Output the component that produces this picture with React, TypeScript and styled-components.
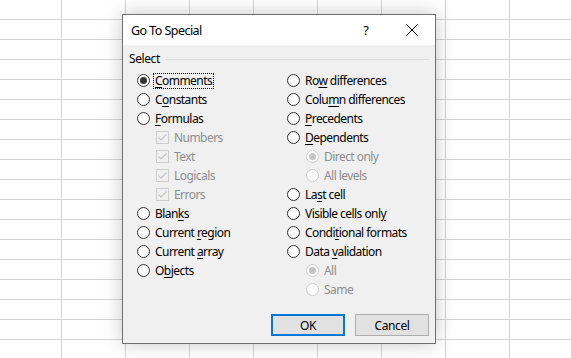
import React from "react";
import styled, { createGlobalStyle } from "styled-components";

const Global = createGlobalStyle`
  html, body { margin: 0; padding: 0; }
  body {
    width: 571px;
    height: 358px;
    overflow: hidden;
    background-color: #ffffff;
    background-image:
      linear-gradient(to right, transparent 0 63px, #d4d4d4 63px 64px),
      linear-gradient(to bottom, transparent 0 19px, #d4d4d4 19px 20px);
    background-size: 64px 100%, 100% 20px;
    background-position: -2px 0, 0 0;
    font-family: "Noto Sans", "Open Sans", sans-serif;
  }
`;

const Sheet = styled.div`
  position: relative;
  width: 571px;
  height: 358px;
`;

const Dialog = styled.div`
  position: absolute;
  left: 122px;
  top: 14px;
  width: 312px;
  height: 328px;
  border: 1px solid #6f6f6f;
  background: #f0f0f0;
  box-shadow: 0 0 18px rgba(0, 0, 0, 0.22);
  display: flex;
  flex-direction: column;
  font-size: 12px;
  color: #000;
`;

const TitleBar = styled.div`
  height: 30px;
  background: #ffffff;
  display: flex;
  align-items: center;
  padding-left: 8px;
`;

const Title = styled.div`
  flex: 1;
  font-size: 12.5px;
  letter-spacing: -0.55px;
`;

const TitleButton = styled.div`
  width: 46px;
  height: 30px;
  display: flex;
  align-items: center;
  justify-content: center;
  font-size: 13px;
`;

const Body = styled.div`
  flex: 1;
  display: flex;
  flex-direction: column;
  padding: 6px 6px 7px 6px;
`;

const GroupHeader = styled.div`
  display: flex;
  align-items: center;
  gap: 5px;
  height: 16px;
  line-height: 16px;
  letter-spacing: -0.4px;
`;

const GroupLine = styled.div`
  flex: 1;
  height: 1px;
  background: #dcdcdc;
`;

const Columns = styled.div`
  display: grid;
  grid-template-columns: 150px 1fr;
  margin-top: 4px;
  padding-left: 8px;
`;

const Column = styled.div`
  display: flex;
  flex-direction: column;
`;

const Row = styled.div<{ $indent?: boolean }>`
  height: 19px;
  display: flex;
  align-items: center;
  padding-left: ${(p) => (p.$indent ? "19px" : "0")};
  gap: 4px;
  white-space: nowrap;
`;

const Label = styled.span<{ $disabled?: boolean; $focused?: boolean }>`
  color: ${(p) => (p.$disabled ? "#8d8d8d" : "#000")};
  letter-spacing: -0.55px;
  line-height: 14px;
  padding: 0 1px;
  outline: ${(p) => (p.$focused ? "1px dotted #000" : "none")};
  outline-offset: 0px;
  u {
    text-underline-offset: 2px;
  }
`;

const Footer = styled.div`
  margin-top: auto;
  display: flex;
  justify-content: flex-end;
  gap: 10px;
`;

const Button = styled.button<{ $primary?: boolean }>`
  width: 74px;
  height: 22px;
  box-sizing: border-box;
  background: #e1e1e1;
  border: ${(p) => (p.$primary ? "2px solid #0078d7" : "1px solid #adadad")};
  font-family: inherit;
  font-size: 12px;
  color: #000;
  padding: 0;
  letter-spacing: -0.4px;
`;

const Radio = ({ checked, disabled }: { checked?: boolean; disabled?: boolean }) => (
  <svg width="13" height="13" viewBox="0 0 13 13">
    <circle cx="6.5" cy="6.5" r="6" fill="#fff" stroke={disabled ? "#cccccc" : "#333"} strokeWidth="1" />
    {checked && <circle cx="6.5" cy="6.5" r="3.5" fill={disabled ? "#c4c4c4" : "#333"} />}
  </svg>
);

const Check = () => (
  <svg width="13" height="13" viewBox="0 0 13 13">
    <rect x="0.5" y="0.5" width="12" height="12" fill="#f0f0f0" stroke="#cccccc" />
    <path d="M2.5 6.5 L5 9 L10.5 3.5" fill="none" stroke="#c4c4c4" strokeWidth="1.1" />
  </svg>
);

type Item = {
  kind: "radio" | "check";
  text: React.ReactNode;
  checked?: boolean;
  disabled?: boolean;
  indent?: boolean;
  focused?: boolean;
};

const left: Item[] = [
  { kind: "radio", text: <><u>C</u>omments</>, checked: true, focused: true },
  { kind: "radio", text: <>C<u>o</u>nstants</> },
  { kind: "radio", text: <><u>F</u>ormulas</> },
  { kind: "check", text: "Numbers", disabled: true, indent: true },
  { kind: "check", text: "Text", disabled: true, indent: true },
  { kind: "check", text: "Logicals", disabled: true, indent: true },
  { kind: "check", text: "Errors", disabled: true, indent: true },
  { kind: "radio", text: <>Blan<u>k</u>s</> },
  { kind: "radio", text: <>Current <u>r</u>egion</> },
  { kind: "radio", text: <>Current <u>a</u>rray</> },
  { kind: "radio", text: <>O<u>b</u>jects</> },
];

const right: Item[] = [
  { kind: "radio", text: <>Ro<u>w</u> differences</> },
  { kind: "radio", text: <>Colu<u>m</u>n differences</> },
  { kind: "radio", text: <><u>P</u>recedents</> },
  { kind: "radio", text: <><u>D</u>ependents</> },
  { kind: "radio", text: "Direct only", disabled: true, indent: true, checked: true },
  { kind: "radio", text: "All levels", disabled: true, indent: true },
  { kind: "radio", text: <>La<u>s</u>t cell</> },
  { kind: "radio", text: <>Visible cells onl<u>y</u></> },
  { kind: "radio", text: <>Condi<u>t</u>ional formats</> },
  { kind: "radio", text: <>Data <u>v</u>alidation</> },
  { kind: "radio", text: "All", disabled: true, indent: true, checked: true },
  { kind: "radio", text: "Same", disabled: true, indent: true },
];

const renderItems = (items: Item[]) =>
  items.map((it, i) => (
    <Row key={i} $indent={it.indent}>
      {it.kind === "radio" ? <Radio checked={it.checked} disabled={it.disabled} /> : <Check />}
      <Label $disabled={it.disabled} $focused={it.focused}>
        {it.text}
      </Label>
    </Row>
  ));

export default function App() {
  return (
    <>
      <Global />
      <Sheet>
        <Dialog>
          <TitleBar>
            <Title>Go To Special</Title>
            <TitleButton>?</TitleButton>
            <TitleButton>
              <svg width="12" height="12" viewBox="0 0 12 12">
                <path d="M0.5 0.5 L11.5 11.5 M11.5 0.5 L0.5 11.5" stroke="#000" strokeWidth="1" />
              </svg>
            </TitleButton>
          </TitleBar>
          <Body>
            <GroupHeader>
              Select
              <GroupLine />
            </GroupHeader>
            <Columns>
              <Column>{renderItems(left)}</Column>
              <Column>{renderItems(right)}</Column>
            </Columns>
            <Footer>
              <Button $primary>OK</Button>
              <Button>Cancel</Button>
            </Footer>
          </Body>
        </Dialog>
      </Sheet>
    </>
  );
}
